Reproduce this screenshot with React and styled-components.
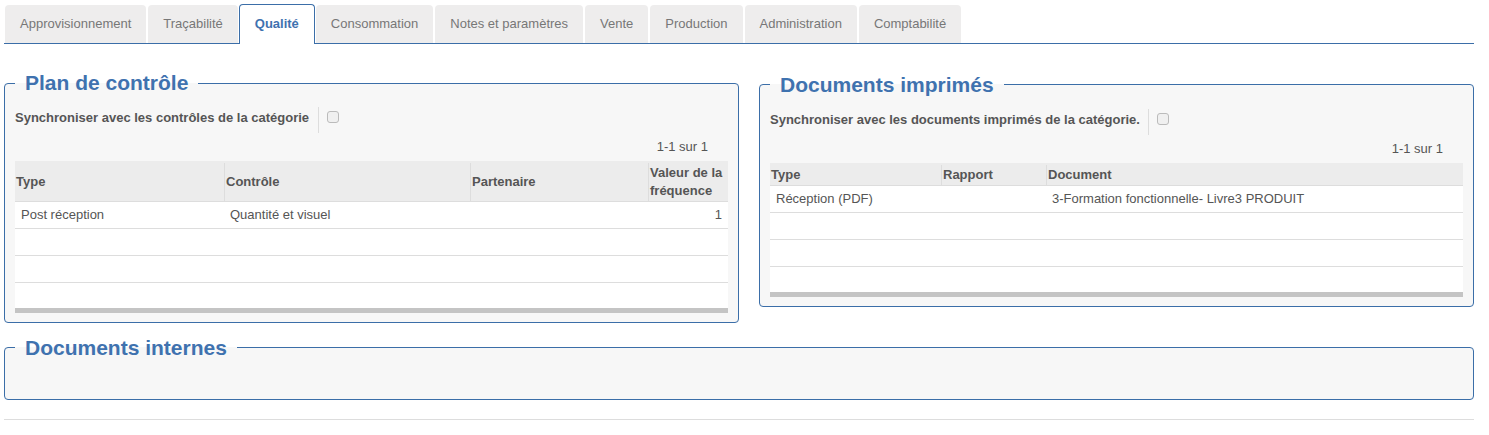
import React from "react";
import styled, { createGlobalStyle } from "styled-components";

const GlobalStyle = createGlobalStyle`
  html, body {
    margin: 0;
    padding: 0;
    background: #fff;
    font-family: "Liberation Sans", Arial, sans-serif;
    font-size: 13px;
    color: #555;
  }
`;

const Page = styled.div`
  width: 1470px;
  padding: 4px 0 0 4px;
`;

const TabBar = styled.ul`
  display: flex;
  height: 39px;
  margin: 0;
  padding: 0 0 0 1px;
  list-style: none;
  border-bottom: 1px solid #3b6ea8;
`;

const Tab = styled.li`
  box-sizing: border-box;
  height: ${(p) => (p.$active ? "40px" : "38px")};
  margin: ${(p) => (p.$active ? "0 1px 0 -1px" : "1px 2px 0 0")};
  padding: 0 15px;
  line-height: ${(p) => (p.$active ? "38px" : "37px")};
  white-space: nowrap;
  border-radius: 4px 4px 0 0;
  color: ${(p) => (p.$active ? "#3f72af" : "#777")};
  font-weight: ${(p) => (p.$active ? "bold" : "normal")};
  background: ${(p) => (p.$active ? "#fff" : "#eeeded")};
  border: ${(p) => (p.$active ? "1px solid #3b6ea8" : "none")};
  border-bottom: none;
`;

const Columns = styled.div`
  display: grid;
  grid-template-columns: 735px 715px;
  column-gap: 20px;
  align-items: start;
  margin-top: 27px;
`;

const Panel = styled.fieldset`
  box-sizing: border-box;
  min-width: 0;
  margin: ${(p) => p.$margin || "0"};
  padding: 0 10px 9px;
  min-height: ${(p) => p.$minHeight || "0"};
  background: #f7f7f7;
  border: 1px solid #3b6ea8;
  border-radius: 4px;
`;

const PanelTitle = styled.legend`
  padding: ${(p) => p.$top || "0"} 10px 0;
  font-size: 21px;
  line-height: 24px;
  font-weight: bold;
  color: #3f72af;
`;

const SyncRow = styled.div`
  display: flex;
  align-items: center;
  height: 26px;
  margin-top: 12px;
`;

const SyncLabel = styled.span`
  height: 26px;
  box-sizing: border-box;
  padding-right: ${(p) => p.$gap || "9px"};
  font-weight: bold;
  line-height: 21px;
  border-right: 1px solid #ddd;
`;

const Check = styled.input.attrs({ type: "checkbox" })`
  appearance: none;
  box-sizing: border-box;
  width: 12px;
  height: 12px;
  margin: 0 0 6px 8px;
  background: #f0f0f0;
  border: 1px solid #bbb;
  border-radius: 3px;
`;

const Pager = styled.div`
  height: 28px;
  line-height: 28px;
  padding-right: 20px;
  text-align: right;
`;

const Grid = styled.table`
  width: 100%;
  table-layout: fixed;
  border-collapse: collapse;
  background: #fff;
`;

const HeadCell = styled.th`
  box-sizing: border-box;
  height: ${(p) => p.$height || "40px"};
  padding: 2px 1px 0 ${(p) => (p.$first ? "1px" : "2px")};
  text-align: left;
  line-height: 18px;
  font-weight: bold;
  background-color: #ececec;
  background-image: ${(p) => (p.$first ? "none" : "linear-gradient(#ddd, #ddd)")};
  background-repeat: no-repeat;
  background-position: left bottom;
  background-size: 1px calc(100% - 2px);
  border-bottom: 1px solid #ddd;
`;

const Cell = styled.td`
  box-sizing: border-box;
  height: 27px;
  padding: 0 6px;
  text-align: ${(p) => (p.$right ? "right" : "left")};
  border-bottom: 1px solid #ddd;
`;

const ScrollBar = styled.div`
  height: 5px;
  margin-top: -2px;
  background: #c4c4c4;
`;

const Rule = styled.hr`
  margin: 19px 0 0;
  border: 0;
  border-top: 1px solid #ddd;
`;

const tabs = [
  "Approvisionnement",
  "Traçabilité",
  "Qualité",
  "Consommation",
  "Notes et paramètres",
  "Vente",
  "Production",
  "Administration",
  "Comptabilité",
];

const DataTable = ({ widths, heads, row, headHeight }) => (
  <>
    <Grid>
      <colgroup>
        {widths.map((w, i) => (
          <col key={i} style={{ width: w }} />
        ))}
      </colgroup>
      <thead>
        <tr>
          {heads.map((h, i) => (
            <HeadCell key={h} $first={i === 0} $height={headHeight}>
              {h}
            </HeadCell>
          ))}
        </tr>
      </thead>
      <tbody>
        <tr>
          {row.map((c, i) => (
            <Cell key={i} $right={c === "1"}>
              {c}
            </Cell>
          ))}
        </tr>
        {[0, 1, 2].map((n) => (
          <tr key={n}>
            {row.map((_, i) => (
              <Cell key={i} />
            ))}
          </tr>
        ))}
      </tbody>
    </Grid>
    <ScrollBar />
  </>
);

export default function App() {
  return (
    <Page>
      <GlobalStyle />
      <TabBar>
        {tabs.map((t) => (
          <Tab key={t} $active={t === "Qualité"}>
            {t}
          </Tab>
        ))}
      </TabBar>
      <Columns>
        <Panel>
          <PanelTitle>Plan de contrôle</PanelTitle>
          <SyncRow>
            <SyncLabel>Synchroniser avec les contrôles de la catégorie</SyncLabel>
            <Check />
          </SyncRow>
          <Pager>1-1 sur 1</Pager>
          <DataTable
            widths={[209, 246, 178, 80]}
            heads={["Type", "Contrôle", "Partenaire", "Valeur de la fréquence"]}
            row={["Post réception", "Quantité et visuel", "", "1"]}
          />
        </Panel>
        <Panel>
          <PanelTitle $top="2px">Documents imprimés</PanelTitle>
          <SyncRow>
            <SyncLabel $gap="8px">Synchroniser avec les documents imprimés de la catégorie.</SyncLabel>
            <Check />
          </SyncRow>
          <Pager>1-1 sur 1</Pager>
          <DataTable
            widths={[171, 105, 417]}
            heads={["Type", "Rapport", "Document"]}
            row={["Réception (PDF)", "", "3-Formation fonctionnelle- Livre3 PRODUIT"]}
            headHeight="22px"
          />
        </Panel>
      </Columns>
      <Panel $margin="13px 0 0" $minHeight="64px">
        <PanelTitle>Documents internes</PanelTitle>
      </Panel>
      <Rule />
    </Page>
  );
}
